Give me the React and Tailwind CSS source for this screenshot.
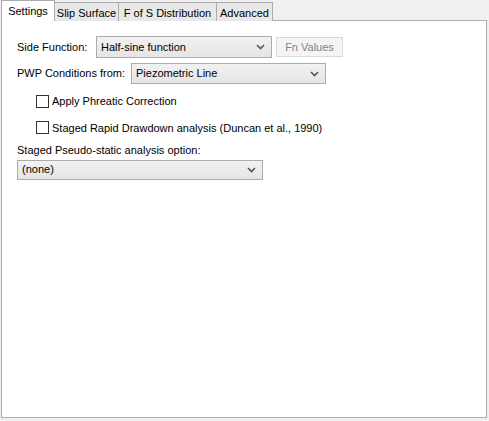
import React from "react";

const font = { fontFamily: "Tahoma, 'Liberation Sans', Arial, sans-serif" };

// small chevron used by the combo boxes
function Chevron() {
  return (
    <svg width="9" height="6" viewBox="0 0 9 6" className="shrink-0">
      <path d="M1 1 L4.5 4.5 L8 1" fill="none" stroke="#555" strokeWidth="1.6" />
    </svg>
  );
}

function Combo({ value, className }) {
  return (
    <div
      className={
        "flex shrink-0 items-center justify-between border border-[#acacac] bg-gradient-to-b from-[#f2f2f2] to-[#e5e5e5] pl-[4px] pr-[6px] text-[11px] text-black " +
        className
      }
    >
      <span className="whitespace-nowrap">{value}</span>
      <Chevron />
    </div>
  );
}

function Check({ label }) {
  return (
    <div className="flex items-center gap-[3px] pl-[34px]">
      <div className="w-[13px] h-[13px] border border-[#333] bg-white" />
      <span className="text-[11px] text-black whitespace-nowrap">{label}</span>
    </div>
  );
}

export default function App() {
  const tabs = [
    { label: "Slip Surface", w: "w-[65px]" },
    { label: "F of S Distribution", w: "w-[99px]" },
    { label: "Advanced", w: "w-[57px]" },
  ];
  return (
    <div className="w-[489px] h-[421px] bg-[#f0f0f0] relative" style={font}>
      <div className="flex items-end h-[21px] pl-[1px]">
        <div className="relative z-10 w-[54px] h-[21px] pt-[2px] text-center bg-white border border-b-0 border-[#acacac] text-[11px] text-black">
          Settings
        </div>
        {tabs.map((t) => (
          <div
            key={t.label}
            className={
              "h-[19px] pt-[2px] -ml-px first:ml-0 text-center whitespace-nowrap bg-[#e8e8e8] border border-b-0 border-[#acacac] text-[11px] text-black " +
              t.w
            }
          >
            {t.label}
          </div>
        ))}
      </div>
      <div className="mx-[1px] -mt-px h-[398px] w-[486px] bg-white border border-[#acacac]">
        <div className="flex items-center mt-[15px] pl-[15px]">
          <span className="w-[79px] shrink-0 whitespace-nowrap text-[11px]">Side Function:</span>
          <Combo value="Half-sine function" className="w-[176px] h-[22px]" />
          <div className="ml-[4px] w-[67px] h-[20px] flex items-center justify-center border border-[#d9d9d9] bg-[#f4f4f4] text-[11px] text-[#838383]">
            Fn Values
          </div>
        </div>
        <div className="flex items-center mt-[5px] pl-[15px]">
          <span className="w-[114px] shrink-0 whitespace-nowrap text-[11px]">PWP Conditions from:</span>
          <Combo value="Piezometric Line" className="w-[195px] h-[21px]" />
        </div>
        <div className="mt-[9px]">
          <Check label="Apply Phreatic Correction" />
        </div>
        <div className="mt-[10px]">
          <Check label="Staged Rapid Drawdown analysis (Duncan et al., 1990)" />
        </div>
        <div className="mt-[6px] pl-[15px] text-[11px]">Staged Pseudo-static analysis option:</div>
        <div className="pl-[15px] mt-[1px]">
          <Combo value="(none)" className="w-[246px] h-[20px]" />
        </div>
      </div>
    </div>
  );
}
